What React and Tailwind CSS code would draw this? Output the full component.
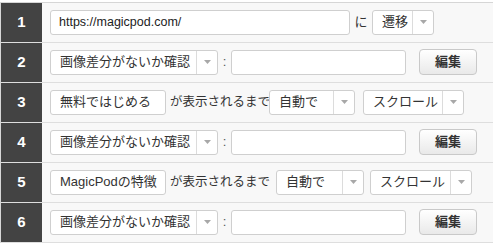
import React from "react";

const font = { fontFamily: '"Liberation Sans", "Noto Sans CJK JP", sans-serif' };

const Arrow = () => (
  <svg width="7" height="4" viewBox="0 0 7 4" className="block">
    <path d="M0 0 L7 0 L3.5 4 Z" fill="#a8a8a8" />
  </svg>
);

const Select = ({ label, className }) => (
  <div
    className={`flex h-[25px] items-stretch rounded-[3px] border border-[#cfcfcf] bg-white ${className}`}
  >
    <div className="flex flex-1 items-center pl-[9px] text-[13px] text-[#333] whitespace-nowrap">
      {label}
    </div>
    <div className="flex w-[21px] items-center justify-center border-l border-[#dcdcdc]">
      <Arrow />
    </div>
  </div>
);

const Input = ({ value, className }) => (
  <div
    className={`flex h-[25px] items-center rounded-[3px] border border-[#cfcfcf] bg-white pl-[8px] text-[12.5px] text-[#222] ${className}`}
  >
    {value}
  </div>
);

const Label = ({ text }) => (
  <div className="flex h-[25px] w-[116px] items-center rounded-[3px] border border-[#cfcfcf] bg-white pl-[9px] text-[13px] text-[#333] whitespace-nowrap">
    {text}
  </div>
);

const EditButton = () => (
  <button className="ml-[13px] flex h-[26px] w-[58px] items-center justify-center rounded-[4px] border border-[#c9c9c9] bg-gradient-to-b from-[#ffffff] to-[#e9e9e9] text-[13px] font-bold text-[#333]">
    編集
  </button>
);

const Row = ({ n, children }) => (
  <div className="flex h-[40px] border-b border-[#dedede]">
    <div className="flex w-[41px] flex-none items-center justify-center bg-[#434343] text-[15px] font-bold text-white">
      {n}
    </div>
    <div className="flex flex-1 items-center pl-[8px] pb-[1px]">{children}</div>
  </div>
);

const DiffRow = ({ n }) => (
  <Row n={n}>
    <Select label="画像差分がないか確認" className="w-[168px]" />
    <span className="w-[13px] text-center text-[13px] text-[#555]">:</span>
    <Input className="w-[175px]" />
    <EditButton />
  </Row>
);

export default function App() {
  return (
    <div className="w-[493px] bg-white pt-[2px]" style={font}>
      <div className="border-t border-l border-[#d6d6d6] bg-[#f8f8f8]">
        <Row n="1">
          <Input value="https://magicpod.com/" className="w-[300px]" />
          <span className="w-[22px] text-center text-[13px] text-[#333]">に</span>
          <Select label="遷移" className="w-[62px]" />
        </Row>
        <DiffRow n="2" />
        <Row n="3">
          <Label text="無料ではじめる" />
          <span className="w-[103px] pl-[4px] text-[12.5px] text-[#333] whitespace-nowrap">
            が表示されるまで
          </span>
          <Select label="自動で" className="w-[86px]" />
          <Select label="スクロール" className="ml-[8px] w-[101px]" />
        </Row>
        <DiffRow n="4" />
        <Row n="5">
          <Label text="MagicPodの特徴" />
          <span className="w-[110px] pl-[4px] text-[12.5px] text-[#333] whitespace-nowrap">
            が表示されるまで
          </span>
          <Select label="自動で" className="w-[88px]" />
          <Select label="スクロール" className="ml-[6px] w-[102px]" />
        </Row>
        <DiffRow n="6" />
      </div>
    </div>
  );
}
